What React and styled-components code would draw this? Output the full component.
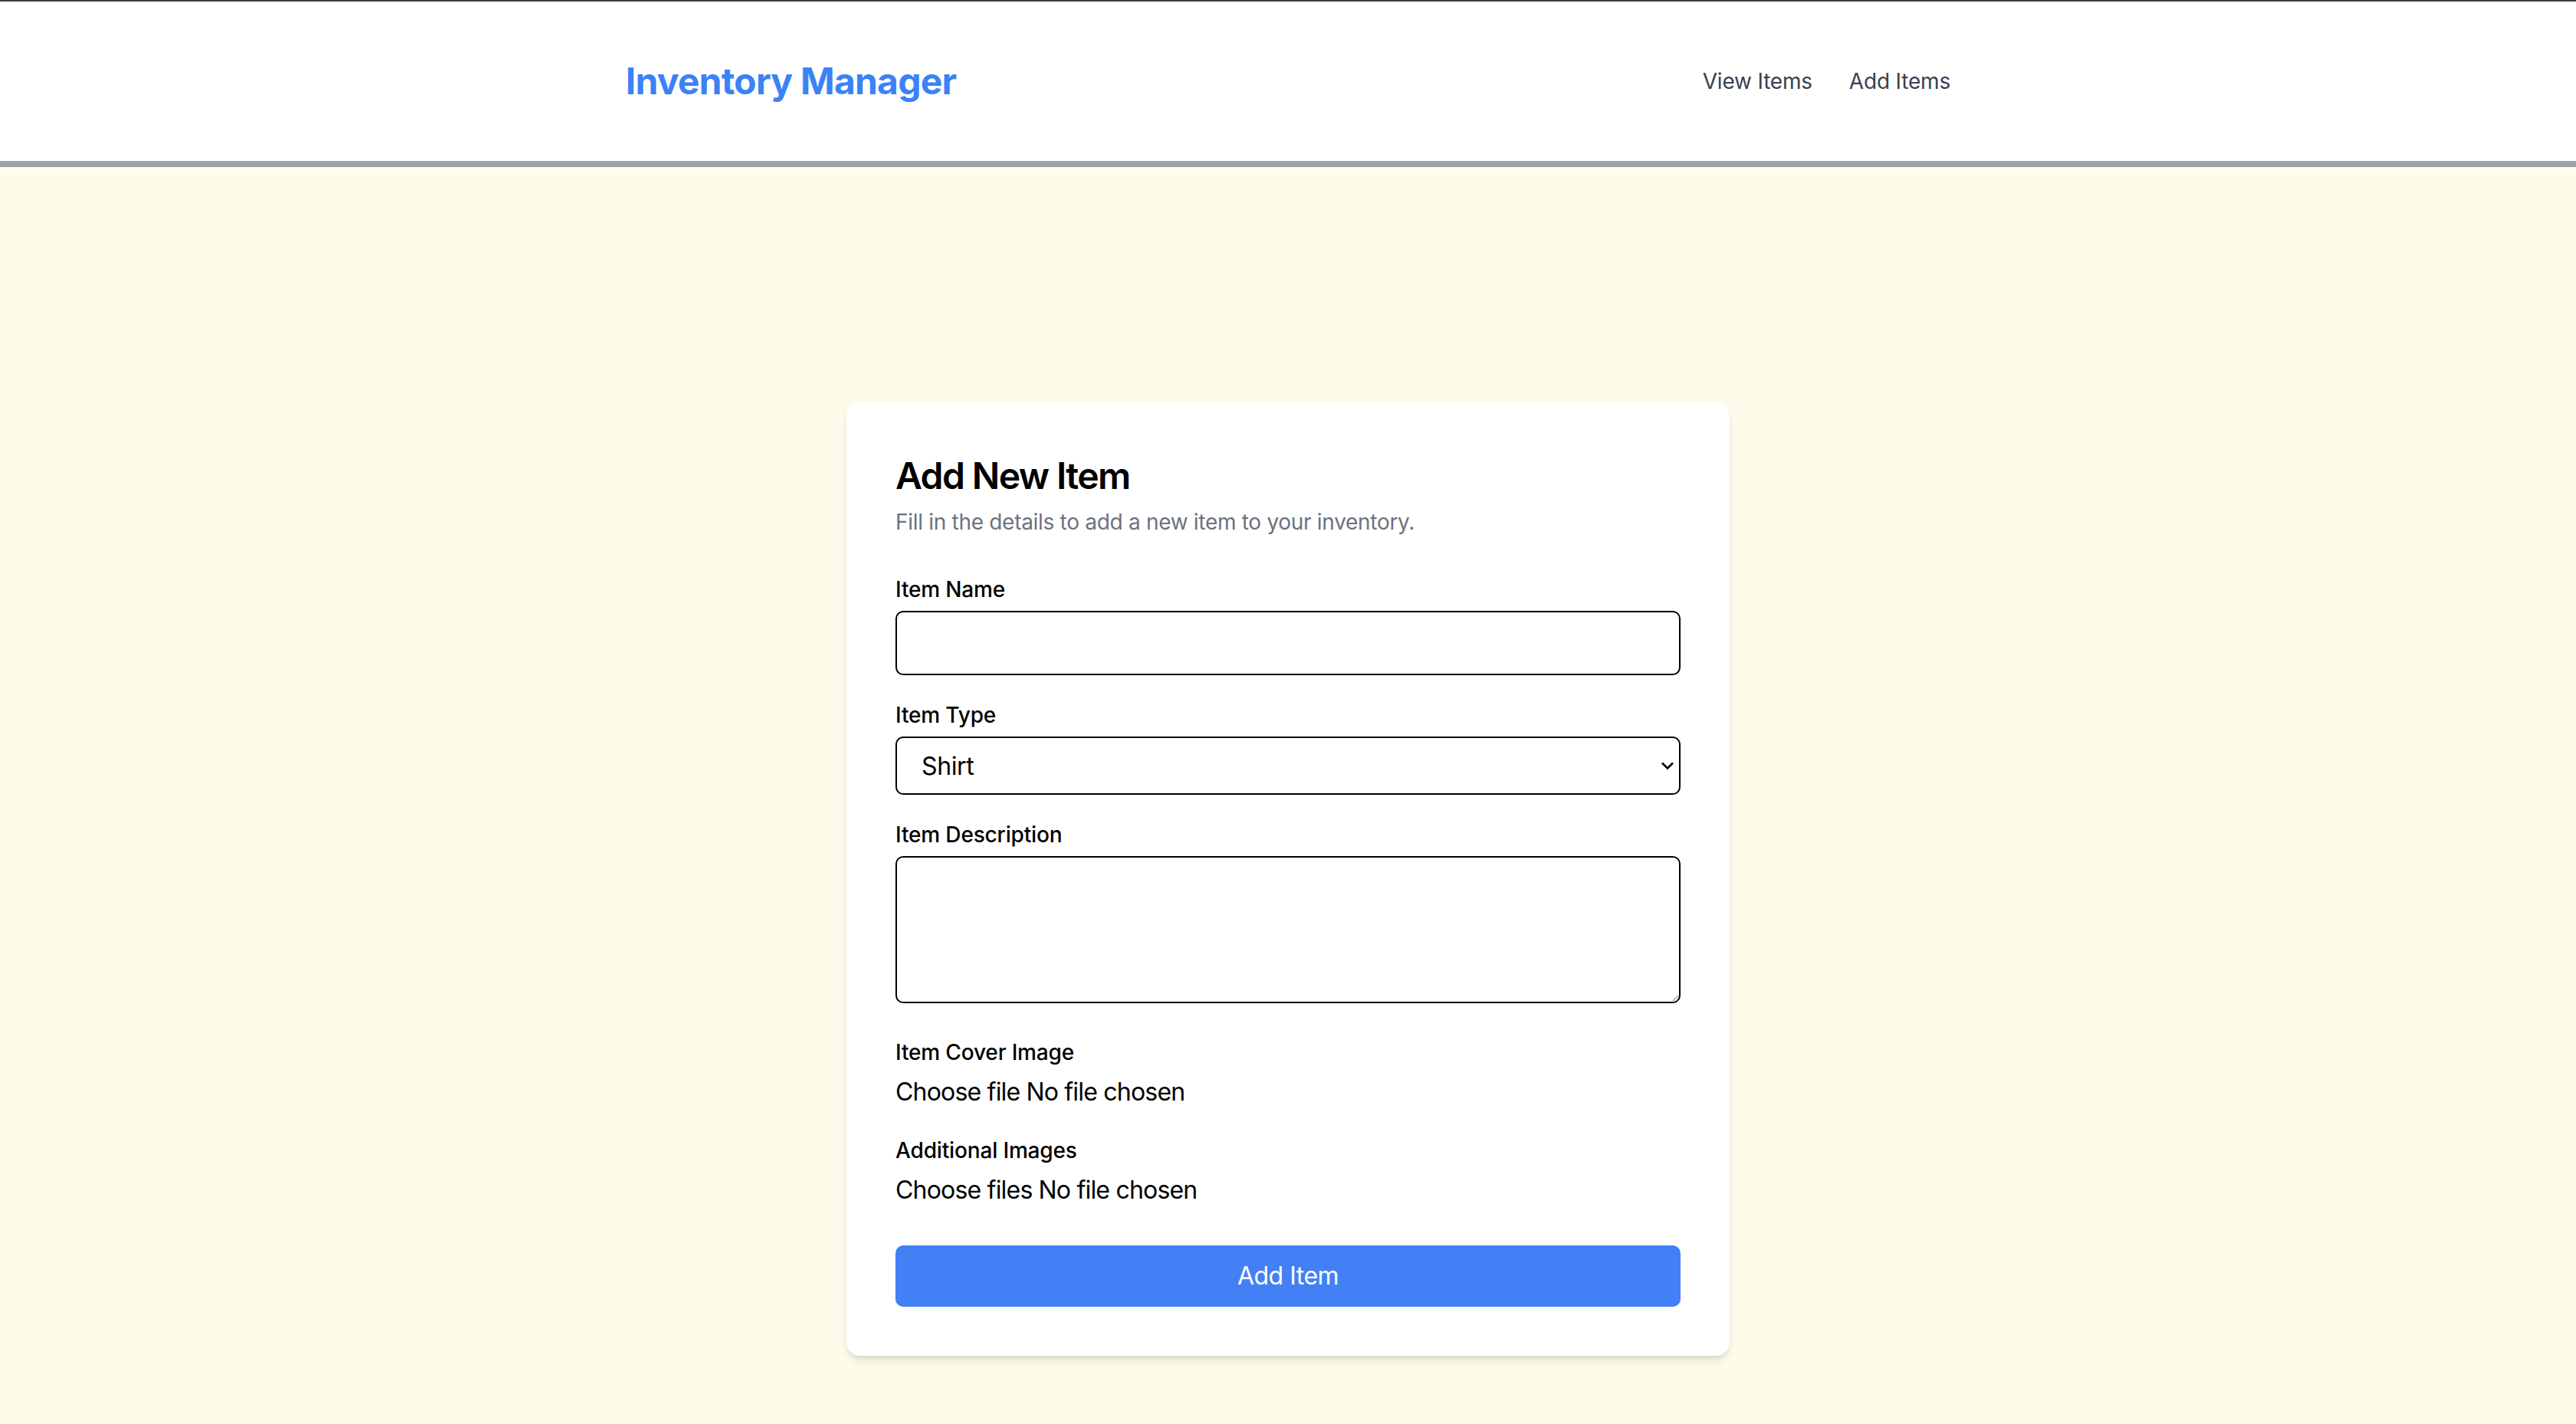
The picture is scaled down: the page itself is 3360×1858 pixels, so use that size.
import React, { useState } from "react";
import styled, { createGlobalStyle } from "styled-components";

const GlobalStyle = createGlobalStyle`
  * {
    box-sizing: border-box;
  }
  body {
    margin: 0;
    font-family: Inter, "Noto Sans", "Liberation Sans", sans-serif;
    background-color: #fffbeb;
    color: #000;
  }
`;

const Header = styled.header`
  background-color: #fff;
  border-top: 2px solid #3c3f44;
  border-bottom: 8px solid #9ca3af;
`;

const HeaderInner = styled.div`
  max-width: 1792px;
  height: 208px;
  margin: 0 auto;
  padding: 0 32px;
  display: flex;
  align-items: center;
  justify-content: space-between;
`;

const Logo = styled.a`
  font-size: 48px;
  line-height: 64px;
  font-weight: 700;
  color: #3b82f6;
  text-decoration: none;
  letter-spacing: -0.8px;
`;

const Nav = styled.nav`
  display: flex;
  gap: 48px;
`;

const NavLink = styled.a`
  font-size: 28px;
  line-height: 40px;
  color: #374151;
  text-decoration: none;
  letter-spacing: -0.2px;
  cursor: pointer;
`;

const Main = styled.main`
  min-height: 100vh;
  display: flex;
  align-items: center;
  justify-content: center;
`;

const Card = styled.div`
  width: 1152px;
  background-color: #fff;
  border-radius: 18px;
  padding: 64px;
  box-shadow: 0 8px 12px -2px rgba(0, 0, 0, 0.1), 0 4px 8px -4px rgba(0, 0, 0, 0.1);
`;

const Title = styled.h2`
  margin: 0;
  font-size: 48px;
  line-height: 64px;
  font-weight: 600;
  letter-spacing: -1.6px;
  color: #000;
`;

const Subtitle = styled.p`
  margin: 8px 0 0;
  font-size: 28px;
  line-height: 40px;
  letter-spacing: -0.3px;
  color: #6b7280;
`;

const Form = styled.form`
  margin-top: 48px;
  display: flex;
  flex-direction: column;
  gap: 32px;
`;

const Field = styled.div`
  display: flex;
  flex-direction: column;
`;

const Label = styled.label`
  display: block;
  font-size: 28px;
  line-height: 40px;
  font-weight: 500;
  letter-spacing: -0.15px;
  margin-bottom: 8px;
`;

const TextInput = styled.input`
  width: 100%;
  height: 84px;
  padding: 16px 24px;
  font: inherit;
  font-size: 32px;
  border: 2px solid #000;
  border-radius: 10px;
  outline: none;
`;

const SelectWrap = styled.div`
  position: relative;
`;

const Select = styled.select`
  width: 100%;
  height: 76px;
  padding: 0 64px 0 32px;
  font: inherit;
  font-size: 32px;
  letter-spacing: -0.4px;
  color: #000;
  background-color: #fff;
  border: 2px solid #000;
  border-radius: 10px;
  appearance: none;
  outline: none;
`;

const Chevron = styled.svg`
  position: absolute;
  right: 8px;
  top: 50%;
  transform: translateY(-50%);
  pointer-events: none;
`;

const TextArea = styled.textarea`
  display: block;
  width: 100%;
  height: 192px;
  padding: 16px 24px;
  font: inherit;
  font-size: 32px;
  border: 2px solid #000;
  border-radius: 10px;
  margin-bottom: 12px;
  outline: none;
`;

const FilePicker = styled.label`
  display: flex;
  gap: 8px;
  font-size: 32px;
  line-height: 48px;
  letter-spacing: -0.8px;
  color: #000;
  cursor: pointer;

  input {
    display: none;
  }
`;

const SubmitButton = styled.button`
  margin-top: 16px;
  height: 80px;
  border: none;
  border-radius: 10px;
  background-color: #4380f5;
  color: #fff;
  font: inherit;
  font-size: 32px;
  line-height: 48px;
  letter-spacing: -0.5px;
  cursor: pointer;
`;

const types = ["Shirt", "Pant", "Shoes", "Sports Gear"];

const FileField = ({ label, multiple }) => {
  const [files, setFiles] = useState([]);
  const status =
    files.length === 0
      ? "No file chosen"
      : files.length === 1
      ? files[0].name
      : `${files.length} files`;
  return (
    <Field>
      <Label as="span">{label}</Label>
      <FilePicker>
        <input
          type="file"
          multiple={multiple}
          onChange={(e) => setFiles(Array.from(e.target.files))}
        />
        <span>{multiple ? "Choose files" : "Choose file"}</span>
        <span>{status}</span>
      </FilePicker>
    </Field>
  );
};

const App = () => {
  const [name, setName] = useState("");
  const [type, setType] = useState("Shirt");
  const [description, setDescription] = useState("");

  return (
    <>
      <GlobalStyle />
      <Header>
        <HeaderInner>
          <Logo href="#">Inventory Manager</Logo>
          <Nav>
            <NavLink>View Items</NavLink>
            <NavLink>Add Items</NavLink>
          </Nav>
        </HeaderInner>
      </Header>
      <Main>
        <Card>
          <Title>Add New Item</Title>
          <Subtitle>Fill in the details to add a new item to your inventory.</Subtitle>
          <Form onSubmit={(e) => e.preventDefault()}>
            <Field>
              <Label htmlFor="name">Item Name</Label>
              <TextInput
                id="name"
                value={name}
                onChange={(e) => setName(e.target.value)}
              />
            </Field>
            <Field>
              <Label htmlFor="type">Item Type</Label>
              <SelectWrap>
                <Select
                  id="type"
                  value={type}
                  onChange={(e) => setType(e.target.value)}
                >
                  {types.map((t) => (
                    <option key={t}>{t}</option>
                  ))}
                </Select>
                <Chevron width="18" height="12" viewBox="0 0 18 12">
                  <path d="M2 2.5 L9 9.5 L16 2.5" fill="none" stroke="#000" strokeWidth="2.6" />
                </Chevron>
              </SelectWrap>
            </Field>
            <Field>
              <Label htmlFor="description">Item Description</Label>
              <TextArea
                id="description"
                value={description}
                onChange={(e) => setDescription(e.target.value)}
              />
            </Field>
            <FileField label="Item Cover Image" />
            <FileField label="Additional Images" multiple />
            <SubmitButton type="submit">Add Item</SubmitButton>
          </Form>
        </Card>
      </Main>
    </>
  );
};

export default App;
